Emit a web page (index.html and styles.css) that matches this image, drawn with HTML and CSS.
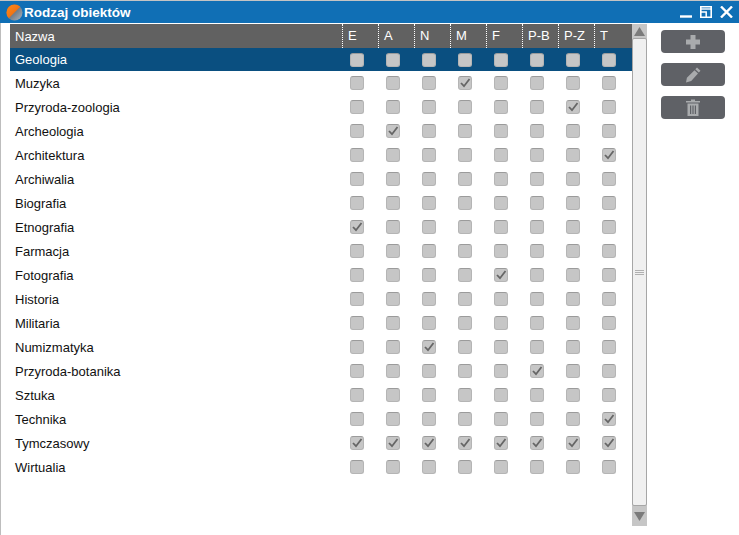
FILE: index.html
```html
<!DOCTYPE html>
<html lang="pl">
<head>
<meta charset="utf-8">
<title>Rodzaj obiektów</title>
<link rel="stylesheet" href="styles.css">
</head>
<body>
<div class="window">
  <header class="titlebar">
    <svg class="logo" width="17" height="17" viewBox="0 0 17 17"><defs><linearGradient id="o" x1="0" y1="0" x2="1" y2="1"><stop offset="0" stop-color="#ff8a1c"/><stop offset="1" stop-color="#e8640c"/></linearGradient><linearGradient id="g" x1="0" y1="0" x2="1" y2="1"><stop offset="0" stop-color="#39434d"/><stop offset="1" stop-color="#aab4bf"/></linearGradient></defs><circle cx="8.5" cy="8.5" r="8" fill="url(#g)"/><path d="M2.800 14.200A8 8 0 0 1 14.200 2.800Z" fill="url(#o)"/></svg>
    <span class="title">Rodzaj obiektów</span>
    <div class="winctrl">
      <svg width="12" height="12" viewBox="0 0 12 12"><path d="M0 10.500h12" stroke="#fff" stroke-width="2.400"/></svg>
      <svg width="12" height="12" viewBox="0 0 12 12" fill="none" stroke="#fff"><path d="M.8.8h10.400v10.400H.8z" stroke-width="1.600"/><path d="M1 3h10" stroke-width="1.400"/><path d="M.8 6h5.400v5.200" stroke-width="1.500"/></svg>
      <svg width="13" height="12" viewBox="0 0 13 12"><path d="M1 .5l11 11M12 .5L1 11.500" stroke="#fff" stroke-width="2.400"/></svg>
    </div>
  </header>
  <div class="body">
    <div class="table" id="table"></div>
    <div class="scrollbar">
      <div class="arrow"><svg width="11" height="9" viewBox="0 0 11 9"><path d="M5.500 0L11 9H0z" fill="#7b7b7b"/></svg></div>
      <div class="track"><svg width="9" height="5" viewBox="0 0 9 5"><path d="M0 .5h9M0 2.500h9M0 4.500h9" stroke="#b0b0b0"/></svg></div>
      <div class="arrow arrow-down"><svg width="11" height="9" viewBox="0 0 11 9"><path d="M0 0h11L5.500 9z" fill="#7b7b7b"/></svg></div>
    </div>
    <aside class="actions">
      <button class="action" type="button"><svg width="16" height="16" viewBox="0 0 16 16"><path d="M5.500 1h5v4.500H15v5h-4.500V15h-5v-4.500H1v-5h4.500z" fill="#a9abad"/></svg></button>
      <button class="action" type="button"><svg width="16" height="16" viewBox="0 0 16 16"><path d="M12 .5l3.500 3.200-1.700 1.800L10.300 2.300zM9.500 3.200l3.500 3.200L6.200 14 1 15.500l.9-4.800z" fill="#a9abad"/></svg></button>
      <button class="action" type="button"><svg width="14" height="17" viewBox="0 0 14 17"><path d="M0 2h5V.5h4V2h5v1.500H0z" fill="#a9abad"/><path d="M1.500 4.500h11V17h-11zM4 6.500V15h1.200V6.500zM6.400 6.500V15h1.200V6.500zM8.800 6.500V15H10V6.500z" fill="#a9abad" fill-rule="evenodd"/></svg></button>
    </aside>
  </div>
</div>
<script src="app.js"></script>
</body>
</html>
```
FILE: app.js
```js
var cols = ["E", "A", "N", "M", "F", "P-B", "P-Z", "T"];
var rows = [
  ["Geologia", []], ["Muzyka", [3]], ["Przyroda-zoologia", [6]], ["Archeologia", [1]],
  ["Architektura", [7]], ["Archiwalia", []], ["Biografia", []], ["Etnografia", [0]],
  ["Farmacja", []], ["Fotografia", [4]], ["Historia", []], ["Militaria", []],
  ["Numizmatyka", [2]], ["Przyroda-botanika", [5]], ["Sztuka", []], ["Technika", [7]],
  ["Tymczasowy", [0, 1, 2, 3, 4, 5, 6, 7]], ["Wirtualia", []]
];
var check = '<svg width="14" height="14" viewBox="0 0 14 14"><path d="M3 7l3 3.200L11.500 3" fill="none" stroke="#666" stroke-width="1.800"/></svg>';
var html = '<div class="row head"><div class="name">Nazwa</div>';
cols.forEach(function (c) { html += '<div class="col">' + c + '</div>'; });
html += '</div>';
rows.forEach(function (r, i) {
  html += '<div class="row' + (i === 0 ? ' selected' : '') + '"><div class="name">' + r[0] + '</div>';
  cols.forEach(function (c, j) {
    html += '<div class="cell"><span class="box">' + (r[1].indexOf(j) >= 0 ? check : '') + '</span></div>';
  });
  html += '</div>';
});
document.getElementById('table').innerHTML = html;
```
FILE: styles.css
```css
* { box-sizing: border-box; }
html, body { margin: 0; height: 100%; background: #fff; overflow: hidden; }
body { font-family: "Liberation Sans", Arial, sans-serif; font-size: 13px; color: #111; }
.window { height: 535px; display: flex; flex-direction: column; border-top: 1px solid #c4c4c4; }
.titlebar { height: 22px; background: #106fb5; display: flex; align-items: center; padding: 0 6px 0 6px; flex: none; }
.logo { flex: none; }
.title { margin-left: 1px; color: #fff; font-weight: bold; font-size: 13.500px; }
.winctrl { margin-left: auto; display: flex; gap: 8px; align-items: center; }
.winctrl svg { display: block; }
.body { flex: 1; display: flex; align-items: stretch; border-left: 1px solid #bdbdbd; padding-left: 9px; padding-top: 1px; }
.table { width: 622px; flex: none; }
.row { display: flex; height: 24px; align-items: center; }
.name { width: 332px; padding: 1px 0 0 5px; flex: none; }
.head { background: #616161; color: #fff; height: 24px; }
.head .name { padding-top: 0; }
.selected .name { padding-top: 0; }
.col { width: 36px; height: 24px; line-height: 24px; padding-left: 5px; flex: none; border-left: 1px dotted #fff; }
.selected { background: #0a4f80; color: #fff; height: 23px; }
.cell { width: 36px; flex: none; display: flex; justify-content: flex-start; padding-left: 8px; }
.box { width: 14px; height: 14px; border-radius: 3px; background: #c6c6c6; border: 1px solid #b5b5b5; border-top-color: #9b9b9b; display: block; position: relative; }
.box svg { position: absolute; left: -1px; top: -1px; display: block; }
.scrollbar { width: 15px; flex: none; display: flex; flex-direction: column; margin-bottom: 9px; background: #c6c6c6; }
.arrow { height: 14px; display: flex; align-items: center; justify-content: center; flex: none; }
.arrow-down { height: 20px; }
.track { flex: 1; background: #f0f0f0; border: 1px solid #a6a6a6; border-radius: 2px; display: flex; align-items: center; justify-content: center; }
.track svg { display: block; }
.actions { margin-left: 14px; padding-top: 6px; display: flex; flex-direction: column; gap: 10px; }
.action { width: 64px; height: 23px; border: 0; padding: 0; border-radius: 4px; background: #5f6166; display: flex; align-items: center; justify-content: center; }
.action svg { display: block; }
```
